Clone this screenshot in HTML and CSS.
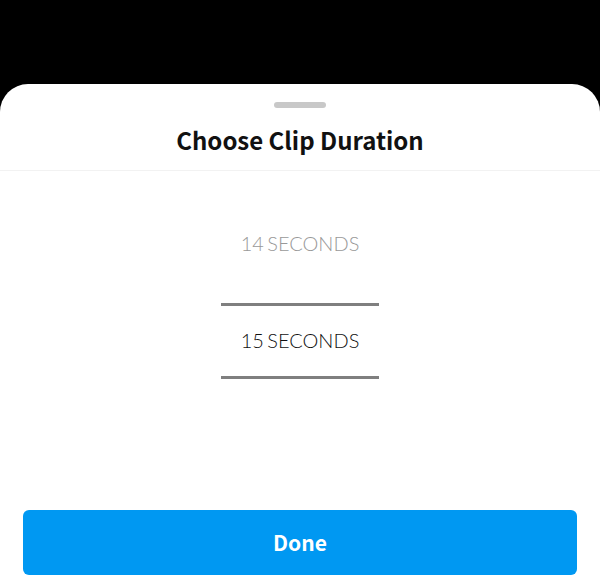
FILE: index.html
```
<!DOCTYPE html>
<html>
<head>
<meta charset="utf-8">
<link rel="stylesheet" href="styles.css">
</head>
<body>
<div class="backdrop"></div>
<div class="sheet">
  <div class="handle"></div>
  <div class="header">
    <h1 class="title">Choose Clip Duration</h1>
  </div>
  <div class="picker">
    <div class="option">14 SECONDS</div>
    <div class="option option-selected">15 SECONDS</div>
  </div>
  <div class="footer">
    <button class="done">Done</button>
  </div>
</div>
</body>
</html>
```

FILE: styles.css
```
html, body {
  margin: 0;
  padding: 0;
  background: #000;
  width: 600px;
  height: 586px;
  overflow: hidden;
}
.backdrop {
  height: 84px;
}
.sheet {
  height: 502px;
  background: #fff;
  border-radius: 28px 28px 0 0;
  display: flex;
  flex-direction: column;
  align-items: center;
}
.handle {
  margin-top: 18px;
  width: 52px;
  height: 6px;
  border-radius: 3px;
  background: #c8c8c8;
}
.header {
  align-self: stretch;
  border-bottom: 1px solid #f2f2f2;
  padding: 17px 0 15px;
  text-align: center;
}
.title {
  margin: 0;
  font-family: "Noto Sans CJK SC", "Noto Sans", sans-serif;
  font-weight: 700;
  font-size: 24px;
  line-height: 30px;
  color: #111;
}
.picker {
  display: flex;
  flex-direction: column;
  align-items: center;
  padding-top: 52px;
}
.option {
  font-family: Lato, sans-serif;
  font-weight: 300;
  font-size: 20px;
  line-height: 40px;
  height: 40px;
  word-spacing: -2px;
  color: #999;
  text-align: center;
}
.option-selected {
  margin-top: 40px;
  width: 158px;
  height: 70px;
  line-height: 69px;
  border-top: 3px solid #7f7f7f;
  border-bottom: 3px solid #7f7f7f;
  color: #111;
}
.footer {
  margin-top: auto;
  align-self: stretch;
  padding: 0 23px 11px;
}
.done {
  display: block;
  width: 100%;
  height: 65px;
  padding: 0 0 2px;
  border: none;
  border-radius: 6px;
  background: #0098f2;
  color: #fff;
  font-family: "Noto Sans CJK SC", "Noto Sans", sans-serif;
  font-weight: 700;
  font-size: 21px;
}
```
